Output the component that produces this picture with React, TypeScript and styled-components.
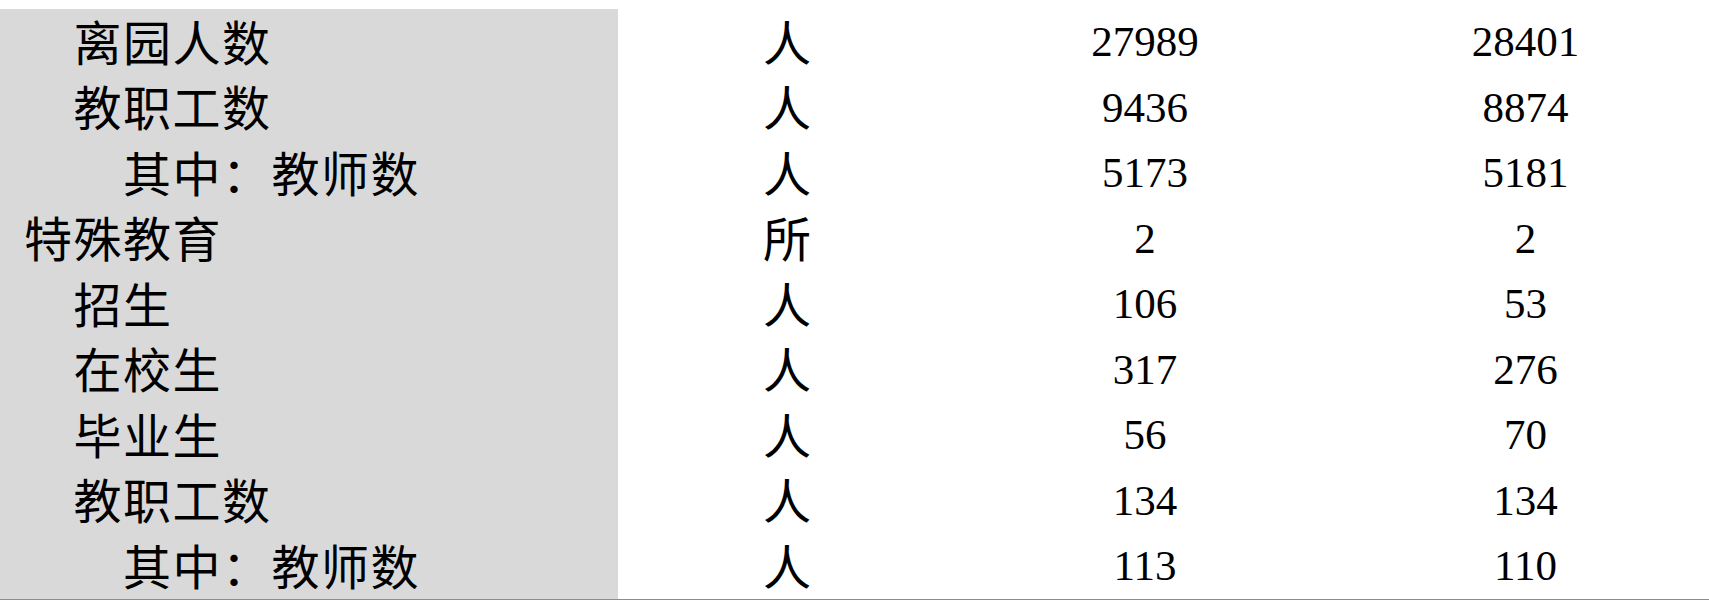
import React from "react";
import styled, { createGlobalStyle } from "styled-components";

const GlobalStyle = createGlobalStyle`
  html, body {
    margin: 0;
    padding: 0;
    background: #ffffff;
    overflow: hidden;
  }
`;

type Row = {
  label: string;
  level: number;
  unit: string;
  prev: string;
  curr: string;
};

const rows: Row[] = [
  { label: "离园人数", level: 1, unit: "人", prev: "27989", curr: "28401" },
  { label: "教职工数", level: 1, unit: "人", prev: "9436", curr: "8874" },
  { label: "其中：教师数", level: 2, unit: "人", prev: "5173", curr: "5181" },
  { label: "特殊教育", level: 0, unit: "所", prev: "2", curr: "2" },
  { label: "招生", level: 1, unit: "人", prev: "106", curr: "53" },
  { label: "在校生", level: 1, unit: "人", prev: "317", curr: "276" },
  { label: "毕业生", level: 1, unit: "人", prev: "56", curr: "70" },
  { label: "教职工数", level: 1, unit: "人", prev: "134", curr: "134" },
  { label: "其中：教师数", level: 2, unit: "人", prev: "113", curr: "110" },
];

export default function App() {
  return (
    <>
      <GlobalStyle />
      <Page>
        <Table>
          {rows.map((row, i) => (
            <React.Fragment key={i}>
              <LabelCell $level={row.level}>{row.label}</LabelCell>
              <UnitCell>{row.unit}</UnitCell>
              <NumberCell>{row.prev}</NumberCell>
              <NumberCell>{row.curr}</NumberCell>
            </React.Fragment>
          ))}
        </Table>
      </Page>
    </>
  );
}

const Page = styled.div`
  width: 1709px;
  height: 600px;
  padding-top: 9px;
  box-sizing: border-box;
  overflow: hidden;
`;

const Table = styled.div`
  display: grid;
  grid-template-columns: 618px 338px 378px 383px;
  grid-auto-rows: 65.5px;
  width: 1717px;
  border-bottom: 1.5px solid #8c8c8c;
`;

const Cell = styled.div`
  display: flex;
  align-items: center;
  color: #000000;
  white-space: nowrap;
`;

const CjkCell = styled(Cell)`
  font-family: "Noto Sans CJK SC", sans-serif;
  font-size: 48px;
  padding-bottom: 4px;
  box-sizing: border-box;
`;

const LabelCell = styled(CjkCell)<{ $level: number }>`
  background: #d9d9d9;
  padding-left: ${(p) => 24 + p.$level * 49.5}px;
  letter-spacing: 1.5px;
`;

const UnitCell = styled(CjkCell)`
  justify-content: center;
`;

const NumberCell = styled(Cell)`
  justify-content: center;
  font-family: "Liberation Serif", "Times New Roman", serif;
  font-size: 43px;
`;
